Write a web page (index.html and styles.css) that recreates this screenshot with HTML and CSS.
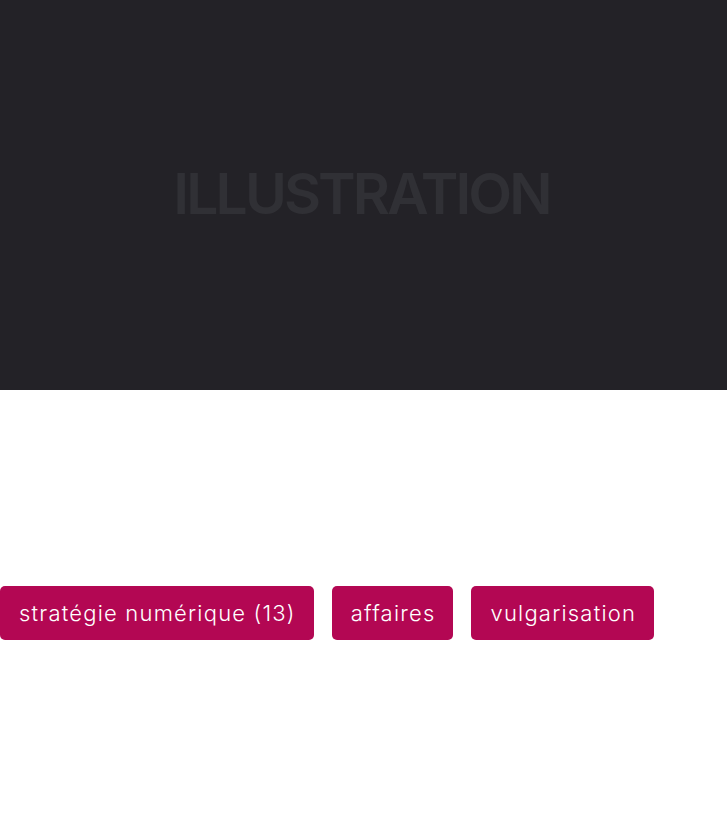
FILE: index.html
```html
<!DOCTYPE html>
<html lang="fr">
<head>
<meta charset="utf-8">
<link rel="stylesheet" href="styles.css">
</head>
<body>
<div class="hero"><span class="hero-title">ILLUSTRATION</span></div>
<div class="tags">
  <a class="tag">stratégie numérique (13)</a>
  <a class="tag">affaires</a>
  <a class="tag">vulgarisation</a>
</div>
</body>
</html>
```
FILE: styles.css
```css
html, body { margin: 0; padding: 0; background: #fff; }
body { font-family: "Inter", "Noto Sans", sans-serif; }
.hero {
  height: 390px;
  background: #232227;
  display: flex;
  align-items: center;
  justify-content: center;
}
.hero-title {
  font-size: 57px;
  font-weight: 600;
  color: #303035;
  letter-spacing: -2.9px;
  margin-top: -3px;
  margin-right: 4px;
}
.tags {
  display: flex;
  gap: 18px;
  padding-top: 196px;
}
.tag {
  background: #b30753;
  color: #fff;
  border-radius: 5px;
  height: 54px;
  display: flex;
  align-items: center;
  padding: 0 18px 0 19px;
  font-size: 22px;
  font-weight: 300;
  letter-spacing: 1.2px;
}
```
